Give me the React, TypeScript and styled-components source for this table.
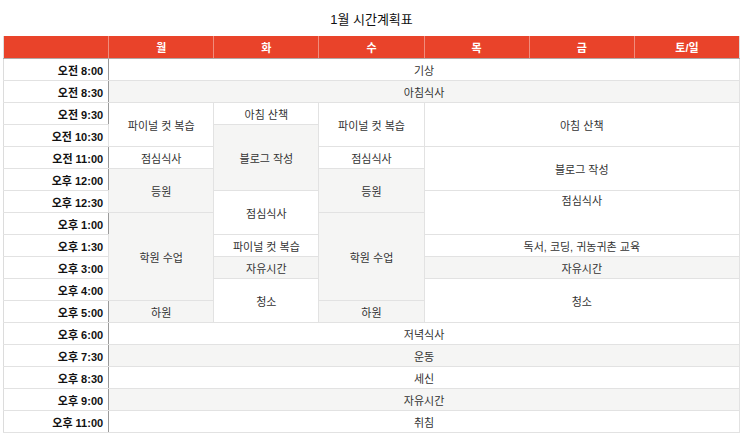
import React from "react";
import styled, { createGlobalStyle } from "styled-components";

const Global = createGlobalStyle`
  html, body { margin: 0; padding: 0; background: #fff; }
  body { font-family: "Liberation Sans", "Noto Sans CJK KR", sans-serif; color: #222; }
`;

const Page = styled.div`
  padding: 0 3px;
`;

const Table = styled.table`
  width: 737px;
  border-collapse: collapse;
  table-layout: fixed;
  border-left: 1px solid #dcdcdc;
  border-right: 1px solid #dcdcdc;
  font-size: 11px;
`;

const Caption = styled.caption`
  caption-side: top;
  font-size: 13px;
  font-weight: 400;
  line-height: 20px;
  padding: 10px 0 6px;
  color: #111;
`;

const HeadCell = styled.th`
  height: 22px;
  padding: 0;
  background: #e9432a;
  color: #fff;
  font-weight: 700;
  font-size: 11px;
  border-left: 1px solid #f08c7c;
  border-right: 1px solid #f08c7c;
  border-bottom: 1px solid #b0a8a6;
  &:first-child { border-left: 1px solid #dcdcdc; }
  &:last-child { border-right: 1px solid #dcdcdc; }
`;

const Row = styled.tr`
  height: 22px;
`;

const TimeCell = styled.th`
  padding: 0 5px 0 0;
  text-align: right;
  font-weight: 700;
  font-size: 11px;
  color: #111;
  background: #fff;
  border-top: 1px solid #e2e2e2;
  border-bottom: 1px solid #e2e2e2;
  border-right: 1px solid #9a9a9a;
  white-space: nowrap;
`;

const Cell = styled.td<{ $shade: boolean; $top?: boolean }>`
  padding: 0;
  text-align: center;
  vertical-align: ${(p) => (p.$top ? "top" : "middle")};
  line-height: ${(p) => (p.$top ? "21px" : "normal")};
  color: #333;
  font-size: 11px;
  background: ${(p) => (p.$shade ? "#f5f5f4" : "#fff")};
  border: 1px solid #e2e2e2;
`;

type C = { t: string; c?: number; r?: number; top?: boolean };

const days = ["월", "화", "수", "목", "금", "토/일"];

const rows: { time: string; cells: C[] }[] = [
  { time: "오전 8:00", cells: [{ t: "기상", c: 6 }] },
  { time: "오전 8:30", cells: [{ t: "아침식사", c: 6 }] },
  {
    time: "오전 9:30",
    cells: [
      { t: "파이널 컷 복습", r: 2 },
      { t: "아침 산책" },
      { t: "파이널 컷 복습", r: 2 },
      { t: "아침 산책", c: 3, r: 2 },
    ],
  },
  { time: "오전 10:30", cells: [{ t: "블로그 작성", r: 3 }] },
  {
    time: "오전 11:00",
    cells: [{ t: "점심식사" }, { t: "점심식사" }, { t: "블로그 작성", c: 3, r: 2 }],
  },
  { time: "오후 12:00", cells: [{ t: "등원", r: 2 }, { t: "등원", r: 2 }] },
  {
    time: "오후 12:30",
    cells: [{ t: "점심식사", r: 2 }, { t: "점심식사", c: 3, r: 2, top: true }],
  },
  { time: "오후 1:00", cells: [{ t: "학원 수업", r: 4 }, { t: "학원 수업", r: 4 }] },
  {
    time: "오후 1:30",
    cells: [{ t: "파이널 컷 복습" }, { t: "독서, 코딩, 귀농귀촌 교육", c: 3 }],
  },
  { time: "오후 3:00", cells: [{ t: "자유시간" }, { t: "자유시간", c: 3 }] },
  { time: "오후 4:00", cells: [{ t: "청소", r: 2 }, { t: "청소", c: 3, r: 2 }] },
  { time: "오후 5:00", cells: [{ t: "하원" }, { t: "하원" }] },
  { time: "오후 6:00", cells: [{ t: "저녁식사", c: 6 }] },
  { time: "오후 7:30", cells: [{ t: "운동", c: 6 }] },
  { time: "오후 8:30", cells: [{ t: "세신", c: 6 }] },
  { time: "오후 9:00", cells: [{ t: "자유시간", c: 6 }] },
  { time: "오후 11:00", cells: [{ t: "취침", c: 6 }] },
];

export default function App() {
  return (
    <Page>
      <Global />
      <Table>
        <Caption>1월 시간계획표</Caption>
        <thead>
          <tr>
            <HeadCell />
            {days.map((d) => (
              <HeadCell key={d}>{d}</HeadCell>
            ))}
          </tr>
        </thead>
        <tbody>
          {rows.map((row, i) => (
            <Row key={row.time}>
              <TimeCell>{row.time}</TimeCell>
              {row.cells.map((c, j) => (
                <Cell
                  key={j}
                  colSpan={c.c}
                  rowSpan={c.r}
                  $shade={i % 2 === 1}
                  $top={c.top}
                >
                  {c.t}
                </Cell>
              ))}
            </Row>
          ))}
        </tbody>
      </Table>
    </Page>
  );
}
